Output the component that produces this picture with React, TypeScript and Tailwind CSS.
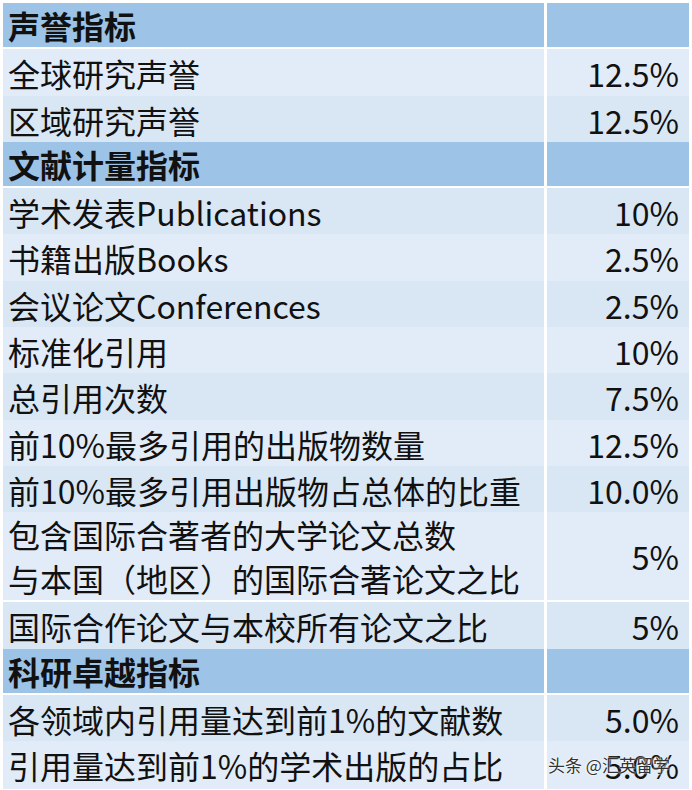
import React from 'react';

type Row = { label: string | string[]; value?: string; header?: boolean };

const rows: Row[] = [
  { label: '声誉指标', header: true },
  { label: '全球研究声誉', value: '12.5%' },
  { label: '区域研究声誉', value: '12.5%' },
  { label: '文献计量指标', header: true },
  { label: '学术发表Publications', value: '10%' },
  { label: '书籍出版Books', value: '2.5%' },
  { label: '会议论文Conferences', value: '2.5%' },
  { label: '标准化引用', value: '10%' },
  { label: '总引用次数', value: '7.5%' },
  { label: '前10%最多引用的出版物数量', value: '12.5%' },
  { label: '前10%最多引用出版物占总体的比重', value: '10.0%' },
  { label: ['包含国际合著者的大学论文总数', '与本国（地区）的国际合著论文之比'], value: '5%' },
  { label: '国际合作论文与本校所有论文之比', value: '5%' },
  { label: '科研卓越指标', header: true },
  { label: '各领域内引用量达到前1%的文献数', value: '5.0%' },
  { label: '引用量达到前1%的学术出版的占比', value: '5.0%' },
];

export default function App() {
  return (
    <div
      className="relative w-[692px] h-[790px] overflow-hidden bg-white text-[#111] text-[32px]"
      style={{ fontFamily: '"Noto Sans CJK SC", "Noto Sans", sans-serif' }}
    >
      <div className="flex flex-col gap-[3px] p-[3px]">
        {rows.map((r, i) => {
          const multi = Array.isArray(r.label);
          const bg = r.header ? 'bg-[#9dc3e6]' : i % 2 === 0 ? 'bg-[#d9e7f5]' : 'bg-[#e2ecf8]';
          return (
            <div key={i} className={`grid grid-cols-[541px_1fr] gap-[3px] ${multi ? 'h-[87px]' : 'h-[43.3px]'}`}>
              <div className={`${bg} flex flex-col justify-center pl-[5px] leading-[44px] whitespace-nowrap ${r.header ? 'font-bold' : ''}`}>
                {multi ? (r.label as string[]).map((l) => <span key={l}>{l}</span>) : <span>{r.label}</span>}
              </div>
              <div className={`${bg} flex items-center justify-end pr-[10px]`}>{r.value}</div>
            </div>
          );
        })}
      </div>
      <div
        className="absolute left-[548px] top-[752px] text-[17px] text-[#333]"
        style={{ textShadow: '0 0 2px #fff, 0 0 2px #fff' }}
      >
        头条 @汇英留学
      </div>
    </div>
  );
}
